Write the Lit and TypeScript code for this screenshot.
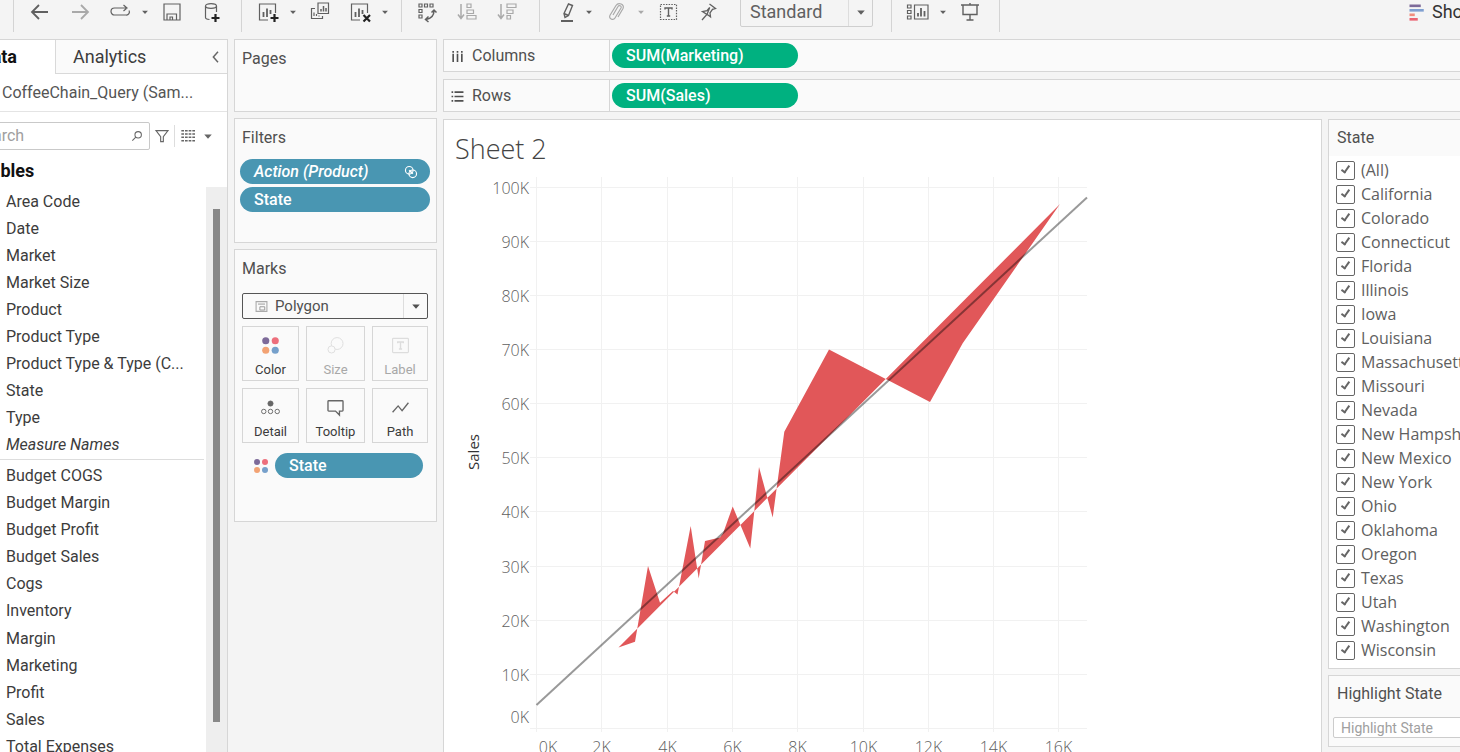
import { LitElement, html, css, svg, nothing } from "lit";
import { customElement, property } from "lit/decorators.js";

const icons: Record<string, unknown> = {
  back: svg`<path d="M4 12h16M11 5l-7 7 7 7" stroke-width="1.8"/>`,
  forward: svg`<path d="M4 12h16M13 5l7 7-7 7" stroke-width="1.8"/>`,
  replay: svg`<path d="M13 15H6.500a3.500 3.500 0 0 1 0-7H18M15.500 5l3.500 3-3.500 3M13 15h5a3 3 0 0 0 3-4.500"/>`,
  save: svg`<path d="M4 4h16v16H4zM7 20v-6h9.500v6M10 20v-3h2.500v3" />`,
  source: svg`<ellipse cx="11" cy="6" rx="5.500" ry="2.300"/><path d="M5.500 6v11.500c0 1 1.500 1.800 4 2M16.500 6v6"/><path d="M15.500 14v8M11.500 18h8" stroke="#222" stroke-width="2.200"/>`,
  newSheet: svg`<path d="M12 20H3.500V4h16v9"/><path d="M7.500 17v-5M11 17V8.500M14.500 14v-4" stroke-width="1.800"/><path d="M18.500 14v8M14.500 18h8" stroke="#222" stroke-width="2.200"/>`,
  duplicate: svg`<path d="M10 3h10.500v10.500H10zM7 8.500H3.500v10h11V16M6 16v-3.500M8.500 16v-2M11 16.500v-1"/><path d="M13 11.500V9M15.500 11.500V6M18 11.500V8" stroke-width="1.500"/>`,
  clear: svg`<path d="M12 20H3.500V4h16v9"/><path d="M7.500 17v-5M11 17V8.500M14.500 14v-4" stroke-width="1.800"/><path d="M15.500 15l6.500 6.500M22 15l-6.500 6.500" stroke="#222" stroke-width="2.200"/>`,
  swap: svg`<path d="M4 4h3v3H4zM9.500 4h3v3h-3zM15 4h3v3h-3zM4 9.500h3v3H4zM4 15h3v3H4z"/><path d="M19 10.500c0 5-2.500 8-8 9M16.500 12.500l2.500-2.500 2.500 2.500M13.500 16.500l-3 3 3 2.500" stroke-width="1.500"/>`,
  sortAsc: svg`<path d="M6 4v14M3 14.500l3 4 3-4" stroke-width="1.500"/><path d="M12 4h4v3.500h-4zM12 10h6.500v3.500H12zM12 15.500h9v3.500h-9z"/>`,
  sortDesc: svg`<path d="M6 4v14M3 14.500l3 4 3-4" stroke-width="1.500"/><path d="M12 4h9v3.500h-9zM12 10h6v3.500h-6zM12 15.500h3.500v3.500H12z"/>`,
  highlight: svg`<path d="M12.500 4l4 1.500-4 10-3.500 2-1-4zM8 13.500l4.500 2" stroke-width="1.400"/><path d="M5 21h12" stroke-width="2"/>`,
  clip: svg`<path d="M10 15.500l5-8.500c1-1.800 4-.500 3 1.500l-6 10c-1.800 3-6.800.500-5-2.800l6-9.700c2.500-4 9-1 7 3l-5 8.500" transform="translate(-1 -.5)"/>`,
  text: svg`<path d="M4.500 4.500h16v15h-16z" stroke-dasharray="1.500 1.200"/><path d="M9 9.500V8h7v1.500M12.500 8v7.500M10.800 16h3.400" stroke-width="1.400"/>`,
  pin: svg`<path d="M13.500 4l6 4.500-3 .800-2.500 3.500.500 4-3.500-2.500L6 20M11 14.500L6.500 11.500l4.500-.800 2.700-3.200z" stroke-width="1.300"/>`,
  cards: svg`<path d="M1.500 5h3.500v3H1.500zM1.500 10.500h3.500v3H1.500zM1.500 16h3.500v3H1.500zM8.500 5h13.500v14H8.500z"/><path d="M12 16.500V13M15 16.500V8M18.500 16.500V11" stroke-width="1.800"/>`,
  present: svg`<path d="M3 5h18M5 5v9.500h14V5M12 14.500V20M8.500 20h7M12 3v2" stroke-width="1.400"/>`,
  caret: svg`<path d="M7 10h10l-5 5.500z" fill="currentColor" stroke="none"/>`,
  collapse: svg`<path d="M15 4l-7 8 7 8" stroke-width="2.200"/>`,
  search: svg`<circle cx="14" cy="10" r="5.500" stroke-width="1.800"/><path d="M10 14l-6 6" stroke-width="1.800"/>`,
  funnel: svg`<path d="M3 4h18l-7 9v7.500h-4V13z" stroke-width="1.700"/>`,
  listView: svg`<path d="M2 4h4M7.500 4h4M13 4h4M18.500 4h4M2 9h4M7.500 9h4M13 9h4M18.500 9h4M2 14h4M7.500 14h4M13 14h4M18.500 14h4M2 19h4M7.500 19h4M13 19h4M18.500 19h4" stroke-width="2.200"/>`,
  columns: svg`<path d="M4 2v3M12 2v3M20 2v3M4 7v15M12 7v15M20 7v15" stroke-width="3"/>`,
  rows: svg`<path d="M1 4h3M1 12h3M1 20h3M6.500 4H23M6.500 12H23M6.500 20H23" stroke-width="3"/>`,
  rings: svg`<circle cx="9" cy="9" r="6.500" stroke-width="2"/><circle cx="15" cy="15" r="6.500" stroke-width="2"/><path d="M9 9l6 6" stroke-width="3"/>`,
  polygon: svg`<path d="M2 3h20v18H2z" stroke="#aaa" stroke-width="2"/><path d="M9 18.500v-6h9v6zM5.500 7.500h13" stroke="#999" stroke-width="1.800"/>`,
  color: svg`<g stroke="none"><circle cx="6" cy="6" r="4.500" fill="#7d6a99"/><circle cx="18" cy="6" r="4.500" fill="#ed6f7c"/><circle cx="6" cy="18" r="4.500" fill="#f2a273"/><circle cx="18" cy="18" r="4.500" fill="#76a0cb"/></g>`,
  size: svg`<circle cx="14" cy="9.500" r="7.500"/><circle cx="7" cy="17" r="4.500" fill="#fafafa"/>`,
  label: svg`<rect x="2" y="3" width="20" height="18" rx="1" stroke-width="1.500"/><path d="M8.500 9V7.500h7V9M12 7.500v8.500M10 16.500h4" stroke-width="1.800"/>`,
  detail: svg`<circle cx="12" cy="7" r="3.200" fill="currentColor" /><circle cx="3.500" cy="17" r="2.800"/><circle cx="12" cy="17" r="2.800"/><circle cx="20.500" cy="17" r="2.800"/>`,
  tooltip: svg`<path d="M3.500 3.500h17a1 1 0 0 1 1 1v11a1 1 0 0 1-1 1H17v5l-5-5H3.500a1 1 0 0 1-1-1v-11a1 1 0 0 1 1-1z" stroke-width="1.700"/>`,
  path: svg`<path d="M2 18l7-8 5 6 8-10" stroke-width="1.700"/>`,
  showMe: svg`<g stroke="none"><path d="M2 2h15v3.500H2z" fill="#7d6a99"/><path d="M2 8h19v3.500H2z" fill="#7f9fd0"/><path d="M2 14h7v3.500H2z" fill="#f08d7d"/><path d="M2 20h11v3.500H2z" fill="#ea6472"/></g>`,
};

@customElement("ui-icon")
export class UiIcon extends LitElement {
  @property() name = "";
  static styles = css`
    :host { display: inline-flex; width: 24px; height: 24px; flex: none; }
    svg { width: 100%; height: 100%; fill: none; stroke: currentColor; stroke-width: 1.2; }
  `;
  render() {
    return html`<svg viewBox="0 0 24 24" aria-hidden="true">${icons[this.name] ?? nothing}</svg>`;
  }
}

const dimensions = ["Area Code", "Date", "Market", "Market Size", "Product", "Product Type", "Product Type & Type (C...", "State", "Type", "Measure Names"];
const measures = ["Budget COGS", "Budget Margin", "Budget Profit", "Budget Sales", "Cogs", "Inventory", "Margin", "Marketing", "Profit", "Sales", "Total Expenses"];
const states = ["(All)", "California", "Colorado", "Connecticut", "Florida", "Illinois", "Iowa", "Louisiana", "Massachusetts", "Missouri", "Nevada", "New Hampshire", "New Mexico", "New York", "Ohio", "Oklahoma", "Oregon", "Texas", "Utah", "Washington", "Wisconsin"];

/* Plot frame of the scatter view */
const plot = { left: 92, right: 643, top: 7, bottom: 558 };
const xStep = 65.3;
const yStep = 54.15;
const outline: [number, number][] = [
  [174.5, 477.5], [191, 471.7], [204, 396], [216, 432.7], [229, 421], [233.5, 424.5],
  [246.7, 356], [254.7, 408.5], [261, 371], [276, 367.5], [279, 363.5], [288.7, 336.5],
  [306.3, 378.5], [315, 297], [328.7, 347.5], [340.3, 261.7], [385, 179.5], [486, 232],
  [518.7, 173.3], [616, 34],
];

@customElement("sheet-chart")
export class SheetChart extends LitElement {
  static styles = css`
    :host { display: block; }
    svg { display: block; }
    .tick { font: 300 16px "Open Sans", sans-serif; fill: #606060; }
    .axis { font: 15px "Open Sans", sans-serif; fill: #333; }
    .grid { stroke: #f1f1f1; stroke-width: 1; }
    .area { fill: #e15759; }
    .trend { stroke: #000; stroke-opacity: 0.4; stroke-width: 2; }
  `;
  render() {
    const ys = Array.from({ length: 11 }, (_, i) => i);
    const xs = Array.from({ length: 9 }, (_, i) => i);
    return html`<svg width="660" height="600" viewBox="0 0 660 600" role="img" aria-label="Sales by Marketing">
      ${ys.map((i) => {
        const y = Math.round(plot.bottom - i * yStep) + 0.5;
        return svg`<line class="grid" x1=${plot.left - 6} x2=${plot.right} y1=${y} y2=${y}/>
          <text class="tick" text-anchor="end" x="85" y=${i === 0 ? 553 : y + 6}>${i * 10}K</text>`;
      })}
      ${xs.map((i) => {
        const x = Math.round(plot.left + i * xStep) + 0.5;
        return svg`<line class="grid" x1=${x} x2=${x} y1=${plot.top} y2=${plot.bottom + 4}/>
          <text class="tick" text-anchor="middle" x=${i === 0 ? 104 : x} y="583">${i * 2}K</text>`;
      })}
      <text class="axis" text-anchor="middle" transform="translate(35 282) rotate(-90)">Sales</text>
      <polygon class="area" points=${outline.map((p) => p.join(",")).join(" ")}></polygon>
      <line class="trend" x1="92.5" y1="535" x2="643" y2="27.5"></line>
    </svg>`;
  }
}

@customElement("app-root")
export class AppRoot extends LitElement {
  static styles = css`
    :host { display: flex; flex-direction: column; height: 100vh; overflow: hidden; background: #f4f4f4; color: #505050; font: 16px/20px Roboto, sans-serif; }
    *, *::before, *::after { box-sizing: border-box; }
    button, input, select { font: inherit; color: inherit; }
    button { border: 0; background: none; padding: 0; display: inline-flex; align-items: center; justify-content: center; }
    h1, h2, ul { margin: 0; padding: 0; font-weight: 400; list-style: none; }
    .toolbar { display: flex; height: 32px; flex: none; margin-bottom: 7px; color: #606060; }
    .group { display: flex; gap: 4px; border-right: 1px solid #d4d4d4; padding: 0 11px 0 8px; height: 32px; }
    .group.edge { width: 14px; padding: 0; flex: none; }
    .group.order { padding: 0 14px 0 7px; }
    .group.marks { padding: 0 18px 0 14px; }
    .split { display: flex; gap: 2px; }
    .tool { width: 36px; height: 24px; flex: none; }
    .tool.narrow { width: 28px; }
    .tool.off, .tool.off + .more { color: #a9a9a9; }
    .more { width: 10px; height: 24px; }
    .tool ui-icon { width: 24px; height: 24px; }
    .more ui-icon { width: 14px; height: 14px; flex: none; }
    .fit { margin-left: 10px; width: 133px; height: 30px; margin-top: -3px; font-size: 18px; border: 1px solid #cfcfcf; }
    .pick { display: grid; grid-template-columns: 1fr 24px; align-items: stretch; border-radius: 2px; }
    .pick select { grid-area: 1 / 1 / 2 / 3; appearance: none; border: 0; background: none; padding: 0 24px 0 9px; outline: none; }
    .pick .arrow { grid-area: 1 / 2; display: flex; align-items: center; justify-content: center; border-left: 1px solid #ddd; pointer-events: none; }
    .arrow ui-icon { width: 18px; height: 18px; }
    .show-me { margin-left: auto; width: 52px; height: 24px; overflow: hidden; justify-content: flex-start; gap: 6px; font-size: 18px; white-space: nowrap; color: #333; }
    .show-me ui-icon { width: 18px; height: 18px; }

    .workspace { flex: 1; min-height: 0; display: grid; grid-template-columns: 228px 203px minmax(0, 1fr); column-gap: 6px; }
    .card { background: #fafafa; border: 1px solid #d6d6d6; }

    .data { margin-left: -40px; min-height: 0; overflow: hidden; background: #fff; border: 1px solid #d6d6d6; border-bottom: 0; display: flex; flex-direction: column; }
    .tabs { display: grid; grid-template-columns: 94px 1fr; height: 34px; flex: none; font-size: 18px; }
    .tabs .on { font-weight: 700; color: #111; justify-content: flex-end; padding-right: 38px; }
    .tabs .rest { background: #fafafa; border: solid #d9d9d9; border-width: 0 0 1px 1px; display: flex; align-items: center; justify-content: space-between; padding: 0 3px 0 17px; color: #3c3c3c; }
    .rest ui-icon { width: 16px; height: 16px; color: #666; }
    .origin { height: 38px; flex: none; display: flex; align-items: center; padding-left: 41px; color: #555; border-bottom: 1px solid #e4e4e4; }
    .find { display: flex; align-items: center; height: 28px; margin-top: 10px; flex: none; color: #666; padding-left: 10px; }
    .search { display: flex; align-items: center; width: 179px; height: 28px; border: 1px solid #c9c9c9; border-radius: 2px; padding-right: 5px; }
    .search input { flex: 1; min-width: 0; border: 0; outline: 0; background: none; padding: 0 0 0 3px; }
    input::placeholder { color: #a0a0a0; opacity: 1; }
    .search ui-icon { width: 14px; height: 14px; }
    .find .funnel { width: 24px; }
    .find .view { width: 27px; height: 22px; border-left: 1px solid #ddd; }
    .find .funnel ui-icon, .find .view ui-icon { width: 16px; height: 16px; }
    .find .menu { width: 14px; }
    .find .menu ui-icon { width: 18px; height: 18px; }
    .tables { flex: none; height: 37px; padding: 10px 0 0 20px; font-size: 18px; font-weight: 700; color: #111; line-height: 22px; }
    .fields { flex: 1; min-height: 0; display: grid; grid-template-columns: 1fr 21px; }
    .lists { min-height: 0; overflow: hidden; color: #3c3c3c; }
    .lists ul { display: grid; grid-auto-rows: 1fr; }
    .lists li { display: flex; align-items: center; padding-left: 45px; }
    .dims { height: 273px; padding-top: 1px; margin-right: 2px; border-bottom: 1px solid #ddd; }
    .dims li:last-child { font-style: italic; }
    .meas { height: 299px; margin-top: 2px; }
    .track { background: #eee; padding: 22px 7px 30px; }
    .thumb { background: #888; height: 100%; }

    .stack { display: flex; flex-direction: column; gap: 6px; }
    .stack h2 { font-size: 16px; line-height: 20px; padding: 9px 7px 0; }
    .pages { height: 73px; }
    .filters { height: 125px; }
    .marks-card { height: 273px; }
    .pill { display: flex; width: 100%; height: 25px; border-radius: 13px; color: #fff; background: #4996b2; justify-content: space-between; padding: 0 12px 0 14px; font-weight: 500; }
    .pill.green { background: #00b180; width: 186px; }
    .pill ui-icon { width: 14px; height: 14px; }
    .pill em { font-style: italic; }
    .pills { display: grid; gap: 3px; padding: 11px 6px 0 5px; }
    .kind { margin: 14px 8px 7px 7px; height: 26px; border: 1px solid #555; font-size: 15px; }
    .kind select { padding-left: 32px; }
    .kind .glyph { grid-area: 1 / 1; display: flex; align-items: center; padding-left: 12px; }
    .glyph ui-icon { width: 13px; height: 13px; }
    .encodings { display: grid; grid-template-columns: 57px 59px 56px; gap: 7px; padding: 0 7px; }
    .enc { height: 55px; border: 1px solid #d6d6d6; flex-direction: column; justify-content: flex-end; gap: 7px; font-size: 13px; line-height: 16px; padding-bottom: 2px; color: #3c3c3c; }
    .enc.off { color: #a8a8a8; }
    .enc.off ui-icon { color: #ddd; }
    .enc ui-icon { width: 19px; height: 19px; color: #666; }
    .on-color { display: grid; grid-template-columns: 16px 1fr; gap: 6px; align-items: center; padding: 10px 13px 0 18px; }
    .on-color ui-icon { width: 16px; height: 16px; }

    .main { display: grid; grid-template-rows: 33px 33px minmax(0, 1fr); row-gap: 7px; min-width: 0; min-height: 0; }
    .shelf { border-right: 0; display: grid; grid-template-columns: 166px 1fr; }
    .shelf .name { display: flex; align-items: center; gap: 8px; padding: 1px 0 0 7px; border-right: 1px solid #d6d6d6; }
    .shelf .name ui-icon { width: 13px; height: 13px; }
    .shelf .drop { display: flex; align-items: center; padding-left: 2px; }
    .view-row { display: grid; grid-template-columns: minmax(0, 1fr) 132px; column-gap: 6px; min-height: 0; }
    .sheet { background: #fff; border-bottom: 0; overflow: hidden; }
    .sheet h1 { font: 300 27px/30px "Open Sans", sans-serif; height: 50px; padding: 14px 0 0 11px; color: #444; }
    .side { display: flex; flex-direction: column; gap: 6px; min-width: 0; }
    .side .card { border-right: 0; overflow: hidden; white-space: nowrap; }
    .side h2 { font-size: 16px; line-height: 20px; padding: 8px 8px; }
    .states { background: #fff; padding: 2px 0 6px 7px; display: grid; grid-auto-rows: 24px; }
    .states label { display: flex; align-items: center; gap: 6px; font: 16px/20px "Open Sans", sans-serif; color: #606060; }
    .states input { appearance: none; margin: 0; width: 19px; height: 19px; flex: none; border: 1px solid #666; border-radius: 2px; background: #fff; display: grid; place-items: center; }
    .states input:checked::before { content: ""; width: 5px; height: 9px; border: solid #666; border-width: 0 2px 2px 0; transform: rotate(35deg); margin-bottom: 3px; }
    .mark-state { height: 72px; }
    .mark-state h2 { padding-bottom: 0; height: 41px; }
    .mark-state h2 label { display: block; }
    .mark-state input { display: block; margin-left: 4px; width: 140px; height: 21px; border: 1px solid #ccc; border-radius: 2px; padding: 0 7px; font-size: 14px; background: #fff; }
  `;

  private tool(name: string, label: string, cls = "") {
    return html`<button class="tool ${cls}" aria-label=${label}><ui-icon name=${name}></ui-icon></button>`;
  }
  private split(name: string, label: string, cls = "") {
    return html`<div class="split">${this.tool(name, label, cls)}<button class="more" aria-label="${label} options"><ui-icon name="caret"></ui-icon></button></div>`;
  }
  private enc(name: string, label: string, cls = "") {
    return html`<button class="enc ${cls}"><ui-icon name=${name}></ui-icon>${label}</button>`;
  }

  render() {
    return html`
      <header class="toolbar">
        <div class="group edge"></div>
        <div class="group">
          ${this.tool("back", "Undo")}${this.tool("forward", "Redo", "off")}${this.split("replay", "Replay")}
          ${this.tool("save", "Save")}${this.tool("source", "New data source")}
        </div>
        <div class="group">
          ${this.split("newSheet", "New worksheet")}${this.tool("duplicate", "Duplicate")}${this.split("clear", "Clear sheet")}
        </div>
        <div class="group order">
          ${this.tool("swap", "Swap")}${this.tool("sortAsc", "Sort ascending", "off")}${this.tool("sortDesc", "Sort descending", "off")}
        </div>
        <div class="group marks">
          ${this.split("highlight", "Highlight", "narrow")}${this.split("clip", "Group", "off")}
          ${this.tool("text", "Show labels")}${this.tool("pin", "Fix axes")}
          <div class="pick fit">
            <select aria-label="Fit"><option>Standard</option></select>
            <span class="arrow"><ui-icon name="caret"></ui-icon></span>
          </div>
        </div>
        <div class="group">${this.split("cards", "Show cards")}${this.tool("present", "Presentation mode")}</div>
        <button class="show-me"><ui-icon name="showMe"></ui-icon>Show Me</button>
      </header>
      <div class="workspace">
        <aside class="data">
          <div class="tabs">
            <button class="on">Data</button>
            <div class="rest"><button>Analytics</button><button aria-label="Collapse"><ui-icon name="collapse"></ui-icon></button></div>
          </div>
          <div class="origin">CoffeeChain_Query (Sam...</div>
          <div class="find">
            <div class="search"><input type="text" placeholder="Search" aria-label="Search" /><ui-icon name="search"></ui-icon></div>
            <button class="funnel" aria-label="Filter"><ui-icon name="funnel"></ui-icon></button>
            <button class="view" aria-label="View"><ui-icon name="listView"></ui-icon></button>
            <button class="menu" aria-label="Menu"><ui-icon name="caret"></ui-icon></button>
          </div>
          <h2 class="tables">Tables</h2>
          <div class="fields">
            <div class="lists">
              <ul class="dims">${dimensions.map((d) => html`<li>${d}</li>`)}</ul>
              <ul class="meas">${measures.map((m) => html`<li>${m}</li>`)}</ul>
            </div>
            <div class="track"><div class="thumb"></div></div>
          </div>
        </aside>
        <div class="stack">
          <section class="card pages"><h2>Pages</h2></section>
          <section class="card filters">
            <h2>Filters</h2>
            <div class="pills">
              <button class="pill"><em>Action (Product)</em><ui-icon name="rings"></ui-icon></button>
              <button class="pill">State</button>
            </div>
          </section>
          <section class="card marks-card">
            <h2>Marks</h2>
            <div class="pick kind">
              <span class="glyph"><ui-icon name="polygon"></ui-icon></span>
              <select aria-label="Mark type"><option>Polygon</option></select>
              <span class="arrow"><ui-icon name="caret"></ui-icon></span>
            </div>
            <div class="encodings">
              ${this.enc("color", "Color")}${this.enc("size", "Size", "off")}${this.enc("label", "Label", "off")}
              ${this.enc("detail", "Detail")}${this.enc("tooltip", "Tooltip")}${this.enc("path", "Path")}
            </div>
            <div class="on-color"><ui-icon name="color"></ui-icon><button class="pill">State</button></div>
          </section>
        </div>
        <main class="main">
          <div class="card shelf">
            <div class="name"><ui-icon name="columns"></ui-icon>Columns</div>
            <div class="drop"><button class="pill green">SUM(Marketing)</button></div>
          </div>
          <div class="card shelf">
            <div class="name"><ui-icon name="rows"></ui-icon>Rows</div>
            <div class="drop"><button class="pill green">SUM(Sales)</button></div>
          </div>
          <div class="view-row">
            <section class="card sheet"><h1>Sheet 2</h1><sheet-chart></sheet-chart></section>
            <div class="side">
              <section class="card">
                <h2>State</h2>
                <div class="states">${states.map((s) => html`<label><input type="checkbox" checked />${s}</label>`)}</div>
              </section>
              <section class="card mark-state">
                <h2><label for="hl">Highlight State</label></h2>
                <input id="hl" type="text" placeholder="Highlight State" />
              </section>
            </div>
          </div>
        </main>
      </div>
    `;
  }
}
